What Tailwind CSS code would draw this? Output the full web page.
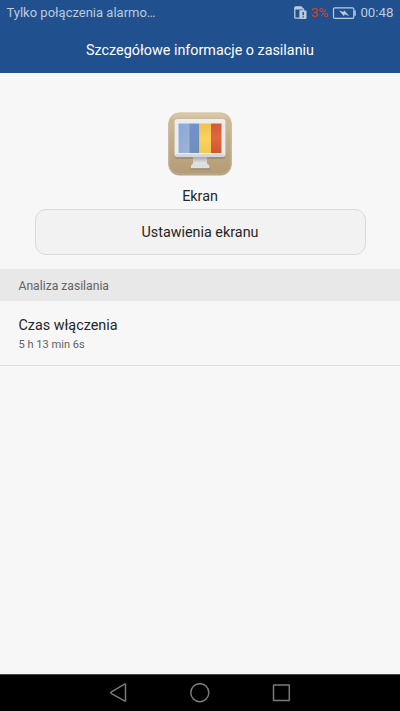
<!DOCTYPE html>
<html lang="pl">
<head>
<meta charset="utf-8">
<title>Szczegółowe informacje o zasilaniu</title>
<script src="https://cdn.jsdelivr.net/npm/@tailwindcss/browser@4"></script>
</head>
<body class="bg-[#f7f7f7] font-['Roboto',sans-serif]">
<div class="flex h-[711px] w-[400px] flex-col overflow-hidden whitespace-nowrap">
  <header class="h-[73px] shrink-0 bg-[#20508d]">
    <div class="flex h-[26px] items-center pl-[6.500px] pr-[6.500px] text-[13px] text-[#bccbdf]">
      <span>Tylko połączenia alarmo…</span>
      <svg class="ml-auto shrink-0" width="13" height="14" viewBox="0 0 13 14">
        <path d="M.8 1.8Q.8.8 1.8.8H7L9.600 3.200V5H6V12.200H1.800Q.8 12.200.8 11.200Z" fill="none" stroke="#bccbdf" stroke-width="1.300"/>
        <path d="M1 1H7L9 3.500H1Z" fill="#bccbdf"/>
        <path d="M7.500 4.500H11.500Q12.500 4.500 12.500 5.500V12Q12.500 13 11.500 13H7Q6 13 6 12V6Z" fill="#bccbdf"/>
        <path d="M9.200 6V9.300M9.200 10.300V11.500" stroke="#20508d" stroke-width="1.400"/>
      </svg>
      <span class="ml-[4px] pb-px text-[13.700px] text-[#c24a32]">3%</span>
      <svg class="ml-[4px] shrink-0" width="24" height="13" viewBox="0 0 24 13">
        <rect x="1.500" y=".8" width="20.300" height="10.600" rx="1.300" fill="none" stroke="#bccbdf" stroke-width="1.200"/>
        <path d="M23 3.500V8.700" stroke="#bccbdf" stroke-width="1.500"/>
        <path d="M7 3.500L11.500 5L12 3.200L17.300 8.900L12.500 7.300L12 9.300Z" fill="#bccbdf"/>
      </svg>
      <span class="ml-[4px] text-[13.300px]">00:48</span>
    </div>
    <h1 class="flex h-[47px] items-center justify-center pt-[2px] text-[14.350px] text-white">Szczegółowe informacje o zasilaniu</h1>
  </header>
  <main class="flex-1">
    <section class="flex flex-col items-center pt-[38px]">
      <svg width="66" height="68" viewBox="0 0 66 68">
        <defs>
          <linearGradient id="tile" x2="0" y2="1"><stop stop-color="#dfcdb0"/><stop offset=".12" stop-color="#cdb994"/><stop offset="1" stop-color="#b39b75"/></linearGradient>
          <linearGradient id="blue" x2="1" y2="1"><stop stop-color="#87a8d8"/><stop offset="1" stop-color="#a0b4d5"/></linearGradient>
          <linearGradient id="navy" x2="0" y2="1"><stop stop-color="#6e93c9"/><stop offset="1" stop-color="#718fbd"/></linearGradient>
          <linearGradient id="gold" x2="0" y2="1"><stop stop-color="#efc04e"/><stop offset=".5" stop-color="#fad35a"/><stop offset="1" stop-color="#f1c85b"/></linearGradient>
          <linearGradient id="red" x2="0" y2="1"><stop stop-color="#d45a37"/><stop offset=".5" stop-color="#e2663d"/><stop offset="1" stop-color="#d05731"/></linearGradient>
          <linearGradient id="stand" x2="0" y2="1"><stop stop-color="#a8aaaa"/><stop offset="1" stop-color="#ececeb"/></linearGradient>
        </defs>
        <rect x="1.500" y="2.500" width="63" height="62" rx="11" fill="#a8a298"/>
        <rect x="1.500" y="1.500" width="63" height="62" rx="11" fill="url(#tile)"/>
        <rect x="2" y="2" width="62" height="61" rx="10.500" fill="none" stroke="#cbbb9f" stroke-width="1" opacity=".6"/>
        <rect x="7.500" y="9.500" width="51" height="38.500" rx="3" fill="#8e7b5d" opacity=".5"/>
        <path d="M26 46H40V53H26Z" fill="url(#stand)"/>
        <path d="M25 54H42L43.500 58.500H23.500Z" fill="#92806a"/>
        <path d="M26 52.500H40L42.500 54.500V57.300H24V54.500Z" fill="#dedfdf"/>
        <rect x="7.500" y="8" width="51" height="38" rx="3" fill="#ececef"/>
        <path d="M8.500 43H57.500V43.500Q57.500 46 55.500 46H10.500Q8.500 46 8.500 43Z" fill="#d6d7db"/>
        <rect x="11" y="12.500" width="44" height="30" fill="#f4f3f2"/>
        <rect x="11.500" y="12.500" width="11.500" height="29.500" fill="url(#blue)"/>
        <rect x="22.500" y="12.500" width="10" height="29.500" fill="url(#navy)"/>
        <rect x="32.500" y="12.500" width="11.500" height="29.500" fill="url(#gold)"/>
        <rect x="44" y="12.500" width="10.500" height="29.500" fill="url(#red)"/>
      </svg>
      <p class="mt-[8px] text-[14.350px] leading-[20px] text-[#252525]">Ekran</p>
      <button class="mt-[2px] h-[46px] w-[331px] rounded-[11px] border border-[#dadada] bg-[#f2f2f2] pt-[2px] text-[14.350px] text-[#252525]">Ustawienia ekranu</button>
    </section>
    <h2 class="mt-[14px] flex h-[32px] items-center bg-[#e8e8e8] pl-[18.500px] pt-[2px] text-[12.150px] text-[#626262]">Analiza zasilania</h2>
    <section class="h-[65px] border-b border-[#dedede] pl-[18.500px] pt-[15px]">
      <p class="text-[14.350px] leading-[20px] text-[#252525]">Czas włączenia</p>
      <p class="mt-px text-[11.100px] leading-[16px] text-[#626262]">5 h 13 min 6s</p>
    </section>
  </main>
  <nav class="flex h-[37px] shrink-0 items-center justify-center gap-[61px] border-t border-[#454545] bg-black">
    <svg width="20" height="20" viewBox="0 0 20 20"><path d="M1.700 9.700Q1.700 9.300 2.500 8.800L15.500 1.200Q16.500.8 16.500 1.800V17.400Q16.500 18.300 15.500 17.800L2.500 10.600Q1.700 10.100 1.700 9.700Z" fill="none" stroke="#7b7b7b" stroke-width="1.500"/></svg>
    <svg width="20" height="20" viewBox="0 0 20 20"><circle cx="9.800" cy="9.700" r="9" fill="none" stroke="#7b7b7b" stroke-width="1.500"/></svg>
    <svg width="20" height="20" viewBox="0 0 20 20"><rect x="2.500" y="2" width="15.800" height="15.600" rx=".5" fill="none" stroke="#7b7b7b" stroke-width="1.500"/></svg>
  </nav>
</div>
</body>
</html>
